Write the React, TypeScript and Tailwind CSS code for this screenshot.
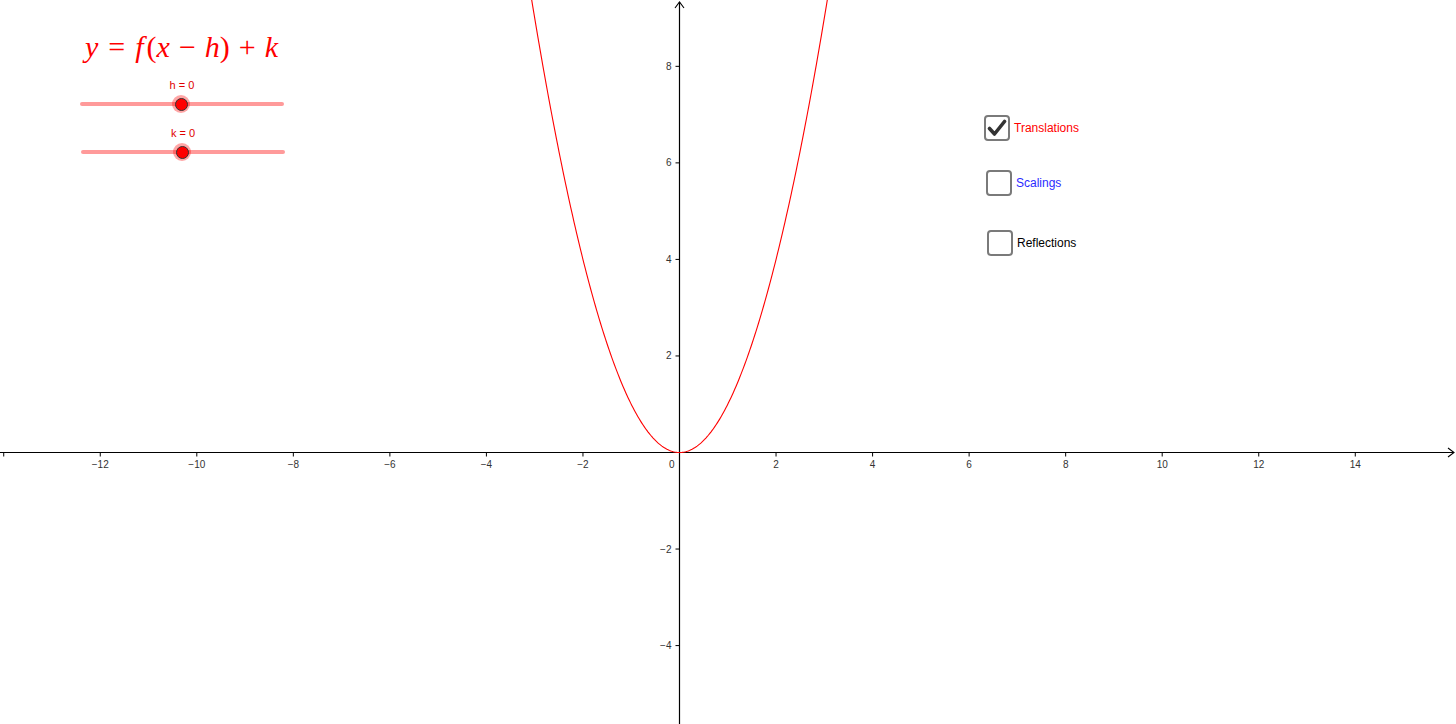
import React from 'react';

const U = 48.27;
const OX = 679.5;
const OY = 452.5;

const px = (x: number) => OX + x * U;
const py = (y: number) => OY - y * U;

function parabolaPath(): string {
  const pts: string[] = [];
  for (let i = 0; i <= 240; i++) {
    const x = -3.12 + (6.24 * i) / 240;
    pts.push(`${i === 0 ? 'M' : 'L'}${px(x).toFixed(2)},${py(x * x).toFixed(2)}`);
  }
  return pts.join(' ');
}

function fmt(n: number): string {
  return n < 0 ? `\u2212${Math.abs(n)}` : `${n}`;
}

function Graph() {
  const xTicks = [-14, -12, -10, -8, -6, -4, -2, 2, 4, 6, 8, 10, 12, 14];
  const yTicks = [-4, -2, 2, 4, 6, 8];
  return (
    <svg className="absolute inset-0" width={1456} height={724} viewBox="0 0 1456 724">
      {/* axes */}
      <line x1={0} y1={OY} x2={1454} y2={OY} stroke="#000" strokeWidth={1.2} />
      <line x1={OX} y1={724} x2={OX} y2={2} stroke="#000" strokeWidth={1.2} />
      <path d={`M1448,${OY - 4.5} L1454,${OY} L1448,${OY + 4.5}`} fill="none" stroke="#000" strokeWidth={1.1} />
      <path d={`M${OX - 4.5},8 L${OX},2 L${OX + 4.5},8`} fill="none" stroke="#000" strokeWidth={1.1} />

      {xTicks.map((t) => (
        <g key={`x${t}`}>
          <line x1={px(t)} y1={OY} x2={px(t)} y2={OY + 4} stroke="#000" strokeWidth={1} />
          {t !== -14 && (
            <text
              x={px(t)}
              y={OY + 15}
              textAnchor="middle"
              fontFamily='"Liberation Sans", Arial, sans-serif'
              fontSize={10}
              fill="#333"
            >
              {fmt(t)}
            </text>
          )}
        </g>
      ))}
      {yTicks.map((t) => (
        <g key={`y${t}`}>
          <line x1={OX - 4} y1={py(t)} x2={OX} y2={py(t)} stroke="#000" strokeWidth={1} />
          <text
            x={OX - 8}
            y={py(t) + 3.5}
            textAnchor="end"
            fontFamily='"Liberation Sans", Arial, sans-serif'
            fontSize={10}
            fill="#333"
          >
            {fmt(t)}
          </text>
        </g>
      ))}
      <text
        x={OX - 5}
        y={OY + 15}
        textAnchor="end"
        fontFamily='"Liberation Sans", Arial, sans-serif'
        fontSize={10}
        fill="#333"
      >
        0
      </text>

      {/* f(x) = x^2 */}
      <path d={parabolaPath()} fill="none" stroke="#ff0000" strokeWidth={1.1} />
    </svg>
  );
}

function Slider({ label }: { label: string }) {
  return (
    <div className="flex flex-col items-center w-[204px]">
      <div className="text-[11px] leading-[14px] text-[#e00000] font-['Liberation_Sans',Arial,sans-serif]">
        {label}
      </div>
      <div className="relative w-full h-[18px] mt-[3px] flex items-center">
        <div className="w-full h-[4px] rounded-full bg-[#ff9a9a]" />
        <div className="absolute left-[92px] top-0 w-[18px] h-[18px] rounded-full bg-[#ff0000]/35 flex items-center justify-center">
          <div className="w-[13px] h-[13px] rounded-full bg-[#ff0000] border border-[#333]" />
        </div>
      </div>
    </div>
  );
}

function CheckBox({ checked, label, color }: { checked?: boolean; label: string; color: string }) {
  return (
    <div className="flex items-center gap-[4px]">
      <div className="w-[26px] h-[26px] rounded-[4px] border-2 border-[#7a7a7a] bg-white flex items-center justify-center">
        {checked && (
          <svg width="20" height="18" viewBox="0 0 20 18">
            <path d="M2.5,9.5 L7.5,15 L17.5,2.5" fill="none" stroke="#333" strokeWidth={3.6} strokeLinecap="round" strokeLinejoin="round" />
          </svg>
        )}
      </div>
      <span className={`text-[12px] leading-none font-['Liberation_Sans',Arial,sans-serif] ${color}`}>{label}</span>
    </div>
  );
}

export default function App() {
  return (
    <div className="relative w-[1456px] h-[724px] overflow-hidden bg-white">
      <Graph />

      {/* formula */}
      <div className="absolute left-[85px] top-[28px] text-[30px] leading-[38px] text-[#ff0000] font-['Liberation_Serif','Times_New_Roman',serif] whitespace-nowrap">
        <i>y</i>
        <span className="mx-[10px]">=</span>
        <i className="mr-[3px]">f</i>
        <span>(</span>
        <i>x</i>
        <span className="mx-[9px]">{'\u2212'}</span>
        <i>h</i>
        <span>)</span>
        <span className="mx-[9px]">+</span>
        <i>k</i>
      </div>

      {/* sliders */}
      <div className="absolute left-[80px] top-[78px] flex flex-col gap-[13px]">
        <Slider label="h = 0" />
        <div className="ml-[1px]">
          <Slider label="k = 0" />
        </div>
      </div>

      {/* checkboxes */}
      <div className="absolute left-[984px] top-[115px] flex flex-col">
        <CheckBox checked label="Translations" color="text-[#ff0000]" />
        <div className="mt-[29px] ml-[2px]">
          <CheckBox label="Scalings" color="text-[#2b2bff]" />
        </div>
        <div className="mt-[34px] ml-[3px]">
          <CheckBox label="Reflections" color="text-black" />
        </div>
      </div>
    </div>
  );
}
